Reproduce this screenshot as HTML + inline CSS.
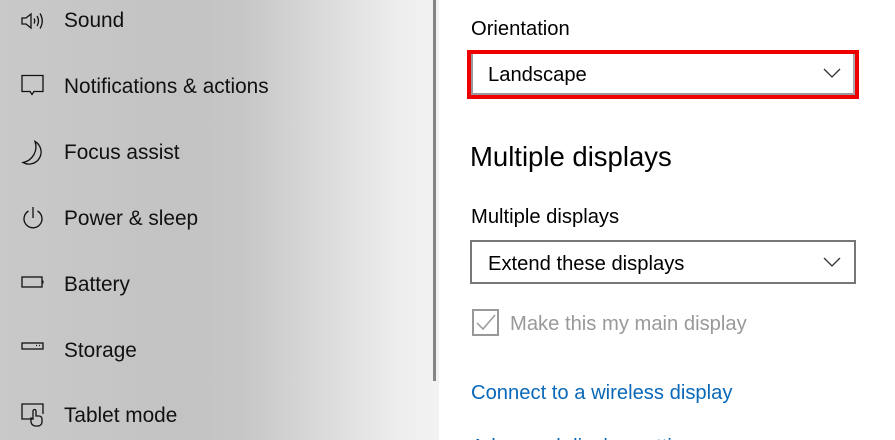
<!DOCTYPE html>
<html><head><meta charset="utf-8"><style>
*{margin:0;padding:0;box-sizing:border-box}
html,body{width:895px;height:440px;overflow:hidden}
body{background:#fff;font-family:"Liberation Sans",sans-serif;position:relative;color:#000}
#side{position:absolute;left:0;top:0;width:439px;height:440px;background:linear-gradient(90deg,#c9c9c9 0%,#c3c3c3 40%,#c6c6c6 55%,#dcdcdc 75%,#efefef 92%,#f2f2f2 100%)}
#sb{position:absolute;left:433px;top:0;width:3px;height:381px;background:#858585}
.it{position:absolute;left:64px;font-size:20.8px;color:#111;line-height:24px}
.ic{position:absolute;left:20px;width:26px;height:26px}
.t{position:absolute;font-size:20.2px;line-height:24px}
</style></head><body>
<div id="side">
<svg class="ic" style="top:8px" viewBox="0 0 26 26" fill="none" stroke="#111" stroke-width="1.3"><path d="M2 10h4l5-4v14l-5-4H2z"/><path d="M14 10.5q1.5 2.5 0 5"/><path d="M17 8q3 5 0 10"/><path d="M20 5.5q4.5 7.5 0 15"/></svg>
<div class="it" style="top:9px">Sound</div>
<svg class="ic" style="top:74px" viewBox="0 0 26 26" fill="none" stroke="#111" stroke-width="1.3"><path d="M2 1.5h21v16h-9l-2 3-2-3H2z"/></svg>
<div class="it" style="top:75px">Notifications &amp; actions</div>
<svg class="ic" style="top:140px" viewBox="0 0 26 26" fill="none" stroke="#111" stroke-width="1.3"><path d="M15 1.5A11 11 0 0 1 3 22.5A16 16 0 0 0 15 1.5z"/></svg>
<div class="it" style="top:141px">Focus assist</div>
<svg class="ic" style="top:206px" viewBox="0 0 26 26" fill="none" stroke="#111" stroke-width="1.3"><path d="M8.5 5a9 9 0 1 0 9 0"/><path d="M13 1v11"/></svg>
<div class="it" style="top:207px">Power &amp; sleep</div>
<svg class="ic" style="top:272px" viewBox="0 0 26 26" fill="none" stroke="#111" stroke-width="1.3"><rect x="2" y="5" width="20" height="10"/><path d="M22.5 8.5v3" stroke-width="2"/></svg>
<div class="it" style="top:273px">Battery</div>
<svg class="ic" style="top:338px" viewBox="0 0 26 26" fill="none" stroke="#111" stroke-width="1.3"><rect x="2" y="5" width="21" height="6"/><path d="M16 7.5h1M19 7.5h1"/></svg>
<div class="it" style="top:339px">Storage</div>
<svg class="ic" style="top:402px" viewBox="0 0 26 26" fill="none" stroke="#111" stroke-width="1.3"><path d="M13 17H2V2h21v10"/><path d="M15 24a5 5 0 0 1-4-4v-4l2 1V9a1.5 1.5 0 0 1 3 0v5h3a3 3 0 0 1 3 3v3a4 4 0 0 1-4 4z"/></svg>
<div class="it" style="top:404px">Tablet mode</div>
<div id="sb"></div>
</div>

<div class="t" style="left:471px;top:17px">Orientation</div>
<div style="position:absolute;left:467px;top:50px;width:392px;height:49px;border:4px solid #e00"></div>
<div style="position:absolute;left:471px;top:54px;width:384px;height:41px;border:2px solid #999;border-top:none;border-right-color:#aaa"></div>
<div class="t" style="left:488px;top:63px">Landscape</div>
<svg style="position:absolute;left:823px;top:67px" width="18" height="12" viewBox="0 0 18 12" fill="none" stroke="#333" stroke-width="1.3"><path d="M1 2l8 8 8-8"/></svg>

<div style="position:absolute;left:470px;top:141px;font-size:27.5px;line-height:32px">Multiple displays</div>
<div class="t" style="left:471px;top:205px">Multiple displays</div>
<div style="position:absolute;left:470px;top:240px;width:386px;height:44px;border:2px solid #777"></div>
<div class="t" style="left:488px;top:252px">Extend these displays</div>
<svg style="position:absolute;left:823px;top:256px" width="18" height="12" viewBox="0 0 18 12" fill="none" stroke="#333" stroke-width="1.3"><path d="M1 2l8 8 8-8"/></svg>

<div style="position:absolute;left:472px;top:309px;width:27px;height:27px;border:2px solid #999"></div>
<svg style="position:absolute;left:474px;top:311px" width="23" height="23" viewBox="0 0 23 23" fill="none" stroke="#999" stroke-width="1.5"><path d="M3 12l6 6L21 4"/></svg>
<div class="t" style="left:510px;top:312px;color:#999">Make this my main display</div>

<div class="t" style="left:471px;top:381px;color:#0a68b8">Connect to a wireless display</div>
<div class="t" style="left:471px;top:435px;color:#0a68b8">Advanced display settings</div>
</body></html>
